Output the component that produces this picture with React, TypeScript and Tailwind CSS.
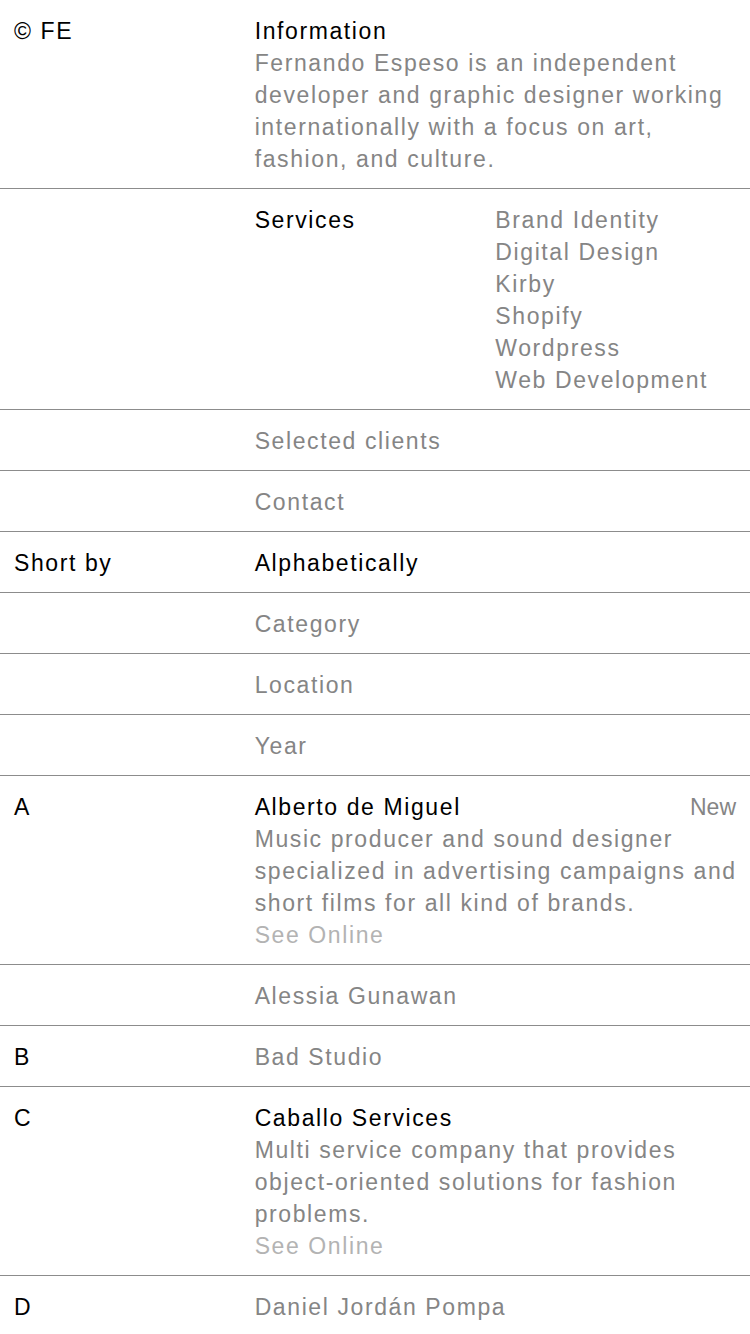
import React from 'react';

type Entry = {
  letter?: string;
  name: string;
  active?: boolean;
  tag?: string;
  text?: string;
  link?: boolean;
};

const entries: Entry[] = [
  {
    letter: 'A',
    name: 'Alberto de Miguel',
    active: true,
    tag: 'New',
    text: 'Music producer and sound designer specialized in advertising campaigns and short films for all kind of brands.',
    link: true,
  },
  { name: 'Alessia Gunawan' },
  { letter: 'B', name: 'Bad Studio' },
  {
    letter: 'C',
    name: 'Caballo Services',
    active: true,
    text: 'Multi service company that provides object-oriented solutions for fashion problems.',
    link: true,
  },
  { letter: 'D', name: 'Daniel Jordán Pompa' },
];

const services = ['Brand Identity', 'Digital Design', 'Kirby', 'Shopify', 'Wordpress', 'Web Development'];

function Row({ children }: { children: React.ReactNode }) {
  return (
    <div className="grid grid-cols-3 px-[14px] pt-[15px] pb-[13px] border-b border-[#8c8c8c]">{children}</div>
  );
}

export default function App() {
  return (
    <div
      className="min-h-screen bg-white text-[23px] leading-[32px] tracking-[1.6px] text-black"
      style={{ fontFamily: '"Liberation Sans", Arial, sans-serif' }}
    >
      <Row>
        <div>© FE</div>
        <div className="col-span-2">
          <div>Information</div>
          <p className="text-[#858585] pr-2">
            Fernando Espeso is an independent developer and graphic designer working internationally with a
            focus on art, fashion, and culture.
          </p>
        </div>
      </Row>

      <Row>
        <div />
        <div>Services</div>
        <ul className="text-[#858585]">
          {services.map((s) => (
            <li key={s} className="whitespace-nowrap">{s}</li>
          ))}
        </ul>
      </Row>

      <Row>
        <div />
        <div className="col-span-2 text-[#858585]">Selected clients</div>
      </Row>
      <Row>
        <div />
        <div className="col-span-2 text-[#858585]">Contact</div>
      </Row>

      <Row>
        <div>Short by</div>
        <div className="col-span-2">Alphabetically</div>
      </Row>
      {['Category', 'Location', 'Year'].map((s) => (
        <Row key={s}>
          <div />
          <div className="col-span-2 text-[#858585]">{s}</div>
        </Row>
      ))}

      {entries.map((e) => (
        <Row key={e.name}>
          <div>{e.letter}</div>
          <div className="col-span-2">
            <div className="flex justify-between">
              <span className={e.active ? 'text-black' : 'text-[#858585]'}>{e.name}</span>
              {e.tag && <span className="text-[#858585] tracking-normal">{e.tag}</span>}
            </div>
            {e.text && <p className="text-[#858585] -mr-[10px]">{e.text}</p>}
            {e.link && <a className="block text-[#b3b3b3]">See Online</a>}
          </div>
        </Row>
      ))}
    </div>
  );
}
